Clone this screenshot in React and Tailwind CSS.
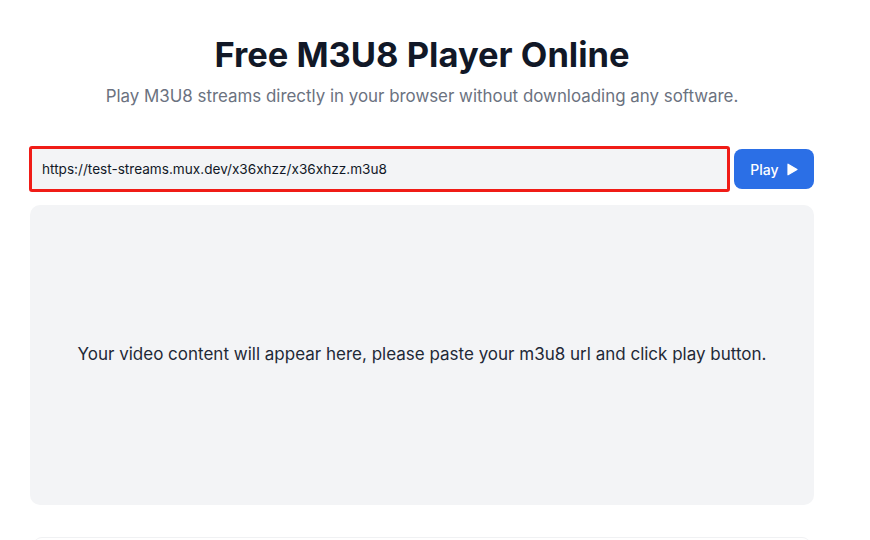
import React from "react";

export default function App() {
  return (
    <div className="min-h-[540px] bg-white">
      <div className="ml-[30px] w-[784px] pt-[35px] font-['Inter',sans-serif]">
        <h1 className="text-center text-[34.5px] font-bold leading-[40px] text-[#111827]">
          Free M3U8 Player Online
        </h1>
        <p className="mt-[9px] text-center text-[16.9px] leading-[24px] text-[#6b7280]">
          Play M3U8 streams directly in your browser without downloading any software.
        </p>
        <div className="mt-[38px] flex items-center gap-[4px]">
          <div className="-ml-px flex-1 rounded-[3px] border-[3px] border-[#f01c17]">
            <input
              readOnly
              value="https://test-streams.mux.dev/x36xhzz/x36xhzz.m3u8"
              className="h-[40px] w-full bg-[#f3f4f6] px-[10px] text-[13.6px] text-[#111827] outline-none"
            />
          </div>
          <button className="flex h-[40px] w-[80px] items-center justify-center gap-[8px] rounded-[8px] bg-[#2b6fe6] text-[14px] font-medium text-white">
            Play
            <svg width="11" height="13" viewBox="0 0 11 13">
              <path d="M1 1.2 L10 6.5 L1 11.8 Z" fill="white" stroke="white" strokeWidth="1.2" strokeLinejoin="round" />
            </svg>
          </button>
        </div>
        <div className="mt-[13px] flex h-[300px] items-center justify-center rounded-[10px] bg-[#f3f4f6]">
          <p className="text-[17px] text-[#1f2937]">
            Your video content will appear here, please paste your m3u8 url and click play button.
          </p>
        </div>
        <div className="mx-[4px] mt-[32px] h-[20px] rounded-t-[8px] border-t border-[#f0f1f3]"></div>
      </div>
    </div>
  );
}
